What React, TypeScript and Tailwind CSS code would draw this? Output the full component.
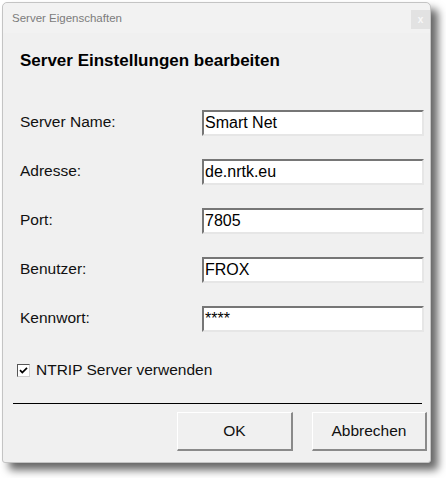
import React from 'react';

const font = { fontFamily: '"Liberation Sans", Arial, sans-serif' };

const rows = [
    { label: 'Server Name:', value: 'Smart Net' },
    { label: 'Adresse:', value: 'de.nrtk.eu' },
    { label: 'Port:', value: '7805' },
    { label: 'Benutzer:', value: 'FROX' },
    { label: 'Kennwort:', value: '****' },
];

const App: React.FC = () => {
    return (
        <div className="w-[446px] h-[478px] bg-white pt-[2px] pl-[2px]" style={font}>
            {/* Dialog window */}
            <div className="w-[429px] h-[461px] bg-[#f0f0f0] border border-[#c4c4c4] rounded-t-[5px] rounded-b-[3px] shadow-[7px_7px_8px_rgba(0,0,0,0.6)] flex flex-col">
                {/* Title bar */}
                <div className="h-[30px] flex justify-between bg-[#f2f2f2] rounded-t-[5px]">
                    <span className="pl-[9px] leading-[30px] text-[11.5px] text-[#7c7c7c]">Server Eigenschaften</span>
                    <div className="mt-[7px] w-[19px] h-[19px] bg-[#e2e2e2] flex items-center justify-center text-[10px] leading-none text-[#f8f8f8] font-bold">
                        x
                    </div>
                </div>

                {/* Heading */}
                <div className="mt-[18px] pl-[17px] h-[20px] leading-[20px] text-[17px] font-bold text-black">
                    Server Einstellungen bearbeiten
                </div>

                {/* Fields */}
                <div className="mt-[39px] pl-[17px] flex flex-col gap-[23px]">
                    {rows.map((r) => (
                        <div key={r.label} className="flex h-[26px]">
                            <div className="w-[182px] leading-[24px] text-[15.5px] text-[#111]">{r.label}</div>
                            <div className="w-[222px] h-[26px] bg-white border-2 border-t-[#767676] border-l-[#767676] border-b-[#e6e6e6] border-r-[#e6e6e6] pl-[1px] leading-[22px] text-[16px] text-black">
                                {r.value}
                            </div>
                        </div>
                    ))}
                </div>

                {/* Checkbox */}
                <div className="mt-[28px] pl-[14px] h-[20px] flex items-center gap-[6px]">
                    <div className="w-[13px] h-[13px] bg-white border border-t-[#555] border-l-[#555] border-b-[#cfcfcf] border-r-[#cfcfcf] flex items-center justify-center">
                        <svg width="9" height="9" viewBox="0 0 9 9">
                            <path d="M1 4.2 L3.3 6.6 L8 1.8" fill="none" stroke="#000" strokeWidth="1.7" />
                        </svg>
                    </div>
                    <span className="leading-[20px] text-[15.5px] text-[#111]">NTRIP Server verwenden</span>
                </div>

                {/* Separator */}
                <div className="mt-[23px] ml-[10px] mr-[8px] h-px bg-black" />

                {/* Buttons */}
                <div className="mt-[8px] flex justify-end gap-[19px] pr-[3px]">
                    <button className="w-[116px] h-[39px] bg-[#f0f0f0] border-t border-l border-t-white border-l-white border-b-2 border-r-2 border-b-[#8a8a8a] border-r-[#8a8a8a] text-[15.5px] text-[#111]">
                        OK
                    </button>
                    <button className="w-[115px] h-[39px] bg-[#f0f0f0] border-t border-l border-t-white border-l-white border-b-2 border-r-2 border-b-[#8a8a8a] border-r-[#8a8a8a] text-[15.5px] text-[#111]">
                        Abbrechen
                    </button>
                </div>
            </div>
        </div>
    );
};

export default App;
